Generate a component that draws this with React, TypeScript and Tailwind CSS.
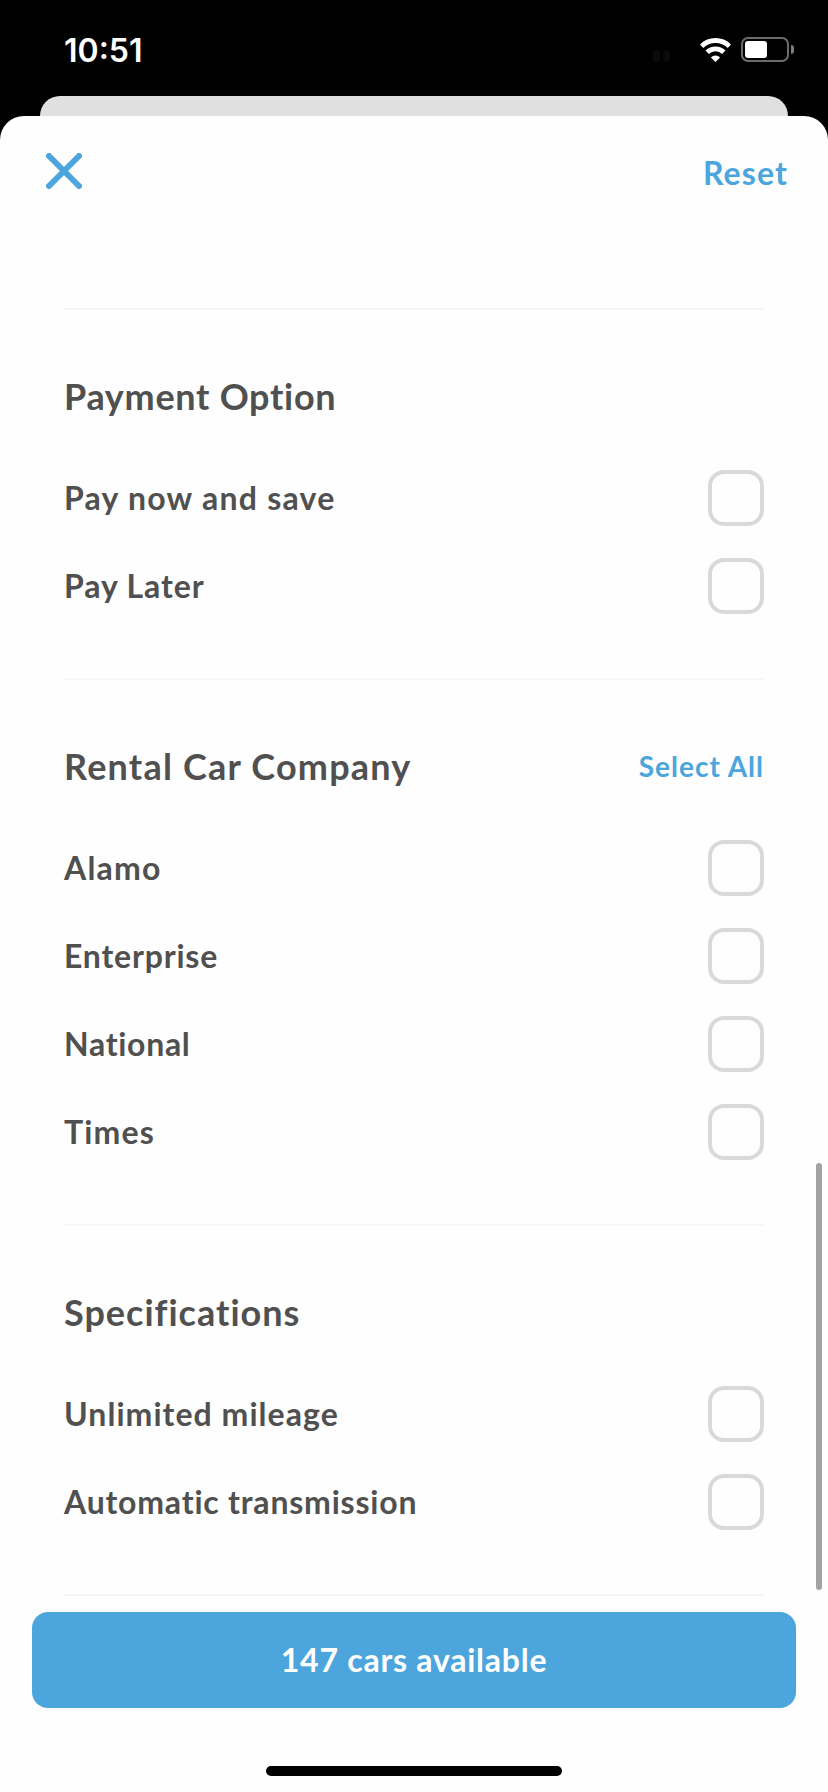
interface FilterOption {
  label: string;
  className: string;
}

interface FilterSectionProps {
  title: string;
  titleClassName: string;
  options: FilterOption[];
  selectAll?: boolean;
}

const paymentOptions: FilterOption[] = [
  { label: "Pay now and save", className: "tracking-[1.25px]" },
  { label: "Pay Later", className: "tracking-[0.9px]" }
];

const companyOptions: FilterOption[] = [
  { label: "Alamo", className: "tracking-[1.2px]" },
  { label: "Enterprise", className: "tracking-[0.8px]" },
  { label: "National", className: "tracking-[0.7px]" },
  { label: "Times", className: "tracking-[1.2px]" }
];

const specificationOptions: FilterOption[] = [
  { label: "Unlimited mileage", className: "tracking-[1.05px]" },
  { label: "Automatic transmission", className: "tracking-[0.8px]" }
];

function StatusBar() {
  return (
    <div className="flex h-24 items-start justify-between pt-[37px] pr-[34px] pl-16 text-white">
      <span className="mt-px font-['Inter',sans-serif] text-[32px] leading-[25px] font-semibold">
        10:51
      </span>
      <div className="flex h-[25px] items-center">
        <div className="mt-3 mr-[30px] flex gap-[3px]">
          <span className="h-3 w-[7px] rounded-sm bg-[#0b0b0b]" />
          <span className="h-3 w-[7px] rounded-sm bg-[#0b0b0b]" />
        </div>
        <svg className="mr-2.5 h-6 w-[31px]" viewBox="0 0 31 24" fill="none">
          <path d="M1.6 8.2a19.8 19.8 0 0 1 27.8 0" stroke="white" strokeWidth="4.8" />
          <path d="M7.2 14.3a11.8 11.8 0 0 1 16.6 0" stroke="white" strokeWidth="4.8" />
          <path d="M15.5 24l-4.6-4.6a6.6 6.6 0 0 1 9.2 0z" fill="white" />
        </svg>
        <div className="flex h-[25px] w-12 items-center rounded-[7px] border-2 border-[#6b6b6b] pl-0.5">
          <div className="h-[17px] w-[22px] rounded-[3px] bg-white" />
        </div>
        <div className="ml-0.5 h-[9px] w-[3px] rounded-r-full bg-[#7d7d7d]" />
      </div>
    </div>
  );
}

function FilterSection({
  title,
  titleClassName,
  options,
  selectAll = false
}: FilterSectionProps) {
  return (
    <section className="mx-16 border-b-2 border-[#f6f6f6] pb-16">
      <div className="flex h-40 items-center justify-between">
        <h2 className={`mt-3 text-[36px] leading-[44px] font-bold ${titleClassName}`}>
          {title}
        </h2>
        {selectAll && (
          <button
            className="mt-3 text-[28px] leading-[44px] font-bold tracking-[1px] text-[#4ca5dd]"
            type="button"
          >
            Select All
          </button>
        )}
      </div>
      <div className="flex flex-col gap-8">
        {options.map((option) => (
          <label key={option.label} className="flex h-14 items-center justify-between">
            <span className={`text-[32px] leading-[40px] font-bold ${option.className}`}>
              {option.label}
            </span>
            <input
              className="size-14 appearance-none rounded-2xl border-4 border-[#d9d9d9]"
              type="checkbox"
            />
          </label>
        ))}
      </div>
    </section>
  );
}

export default function App() {
  return (
    <main className="h-[1792px] w-[828px] overflow-hidden bg-black font-['Lato',sans-serif] text-[#505050]">
      <StatusBar />
      <div className="mx-10 h-5 rounded-t-[20px] bg-[#e0e0e0]" />

      <div className="relative flex h-[1676px] flex-col rounded-t-[24px] bg-[#fefefe]">
        <header className="flex h-48 items-start justify-between pt-[37px] pr-10 pl-[46px]">
          <button type="button" aria-label="Close">
            <svg className="size-9" viewBox="0 0 36 36" fill="none">
              <path
                d="M3 3l30 30M33 3L3 33"
                stroke="#4ca5dd"
                strokeWidth="6"
                strokeLinecap="round"
              />
            </svg>
          </button>
          <button
            className="text-[32px] leading-[40px] font-bold tracking-[1.1px] text-[#4ca5dd]"
            type="button"
          >
            Reset
          </button>
        </header>
        <div className="mx-16 h-0.5 bg-[#f6f6f6]" />

        <FilterSection
          title="Payment Option"
          titleClassName="tracking-[0.7px]"
          options={paymentOptions}
        />
        <FilterSection
          title="Rental Car Company"
          titleClassName="tracking-[1.2px]"
          options={companyOptions}
          selectAll
        />
        <FilterSection
          title="Specifications"
          titleClassName="tracking-[1px]"
          options={specificationOptions}
        />

        <footer className="flex flex-col items-center px-8 pt-4">
          <button
            className="h-24 w-full rounded-2xl bg-[#4ca5dd] text-[32px] leading-[40px] font-bold tracking-[0.75px] text-white"
            type="button"
          >
            147 cars available
          </button>
          <div className="mt-[58px] h-2.5 w-[296px] rounded-full bg-black" />
        </footer>

        {/* scroll indicator */}
        <div className="absolute top-[1047px] right-1.5 h-[427px] w-1.5 rounded-full bg-[#a3a3a3]" />
      </div>
    </main>
  );
}
